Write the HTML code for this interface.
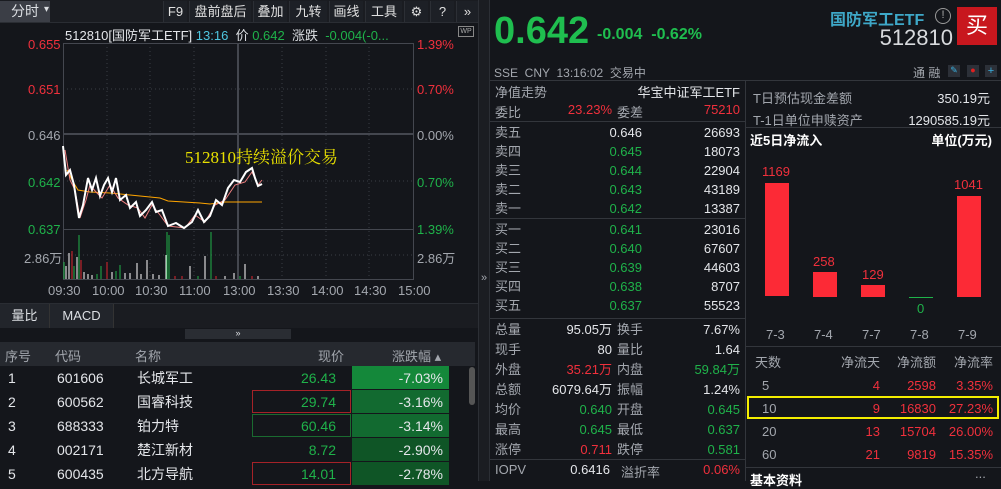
<!DOCTYPE html><html><head><meta charset="utf-8"><style>
*{margin:0;padding:0;box-sizing:border-box}
body{width:1001px;height:481px;background:#14161b;font-family:"Liberation Sans","Noto Sans CJK SC",sans-serif;font-size:13px;color:#dcdfe3;position:relative;overflow:hidden}
.a{position:absolute;white-space:nowrap}
.g{color:#1fb24a}.r{color:#f0303c}.w{color:#e4e6ea}.gy{color:#a3a7ae}
.rt{text-align:right}
.btn{position:absolute;top:1px;height:21px;line-height:21px;background:#1d2026;text-align:center;color:#e0e0e0;font-size:13px;border-left:1px solid #2c2f35}
</style></head><body>
<!-- top toolbar -->
<div class="a" style="left:0;top:0;width:478px;height:23px;background:#1a1c21;border-bottom:1px solid #2a2d33"></div>
<div class="a" style="left:0;top:1px;width:50px;height:21px;background:#3b3e46;line-height:21px;text-align:center;font-size:14px">分时</div>
<div class="a" style="left:44px;top:4px;font-size:10px">▾</div>
<div class="btn" style="left:163px;width:24px">F9</div>
<div class="btn" style="left:189px;width:62px">盘前盘后</div>
<div class="btn" style="left:253px;width:34px">叠加</div>
<div class="btn" style="left:289px;width:38px">九转</div>
<div class="btn" style="left:329px;width:34px">画线</div>
<div class="btn" style="left:365px;width:37px">工具</div>
<div class="btn" style="left:404px;width:24px">⚙</div>
<div class="btn" style="left:430px;width:24px">?</div>
<div class="btn" style="left:456px;width:22px">»</div>
<!-- chart header -->
<div class="a" style="left:65px;top:25px;font-size:13px"><span class="w">512810[国防军工ETF]</span> <span style="color:#4ec6e0">13:16</span> &nbsp;价 <span class="g">0.642</span> &nbsp;涨跌 &nbsp;<span class="g">-0.004(-0...</span></div>
<div class="a" style="left:458px;top:26px;width:16px;height:11px;border:1px solid #888;font-size:7px;line-height:9px;text-align:center;color:#aaa">WP</div>
<!-- chart -->
<svg class="a" style="left:0;top:0" width="478" height="300">
<g stroke="#3a3d44" stroke-dasharray="1,3" fill="none">
<line x1="63" y1="89" x2="413" y2="89"/><line x1="63" y1="181" x2="413" y2="181"/><line x1="63" y1="255" x2="413" y2="255"/>
<line x1="107" y1="43" x2="107" y2="279"/><line x1="150" y1="43" x2="150" y2="279"/><line x1="194" y1="43" x2="194" y2="279"/>
<line x1="282" y1="43" x2="282" y2="279"/><line x1="326" y1="43" x2="326" y2="279"/><line x1="369" y1="43" x2="369" y2="279"/>
</g>
<g stroke="#44474f" fill="none" stroke-width="1">
<rect x="63.5" y="43.5" width="350" height="236"/>
<line x1="63" y1="134" x2="413" y2="134" stroke-width="2"/>
<line x1="63" y1="229.5" x2="413" y2="229.5"/>
<line x1="238" y1="43" x2="238" y2="279" stroke-width="2"/>
</g>
<polyline fill="none" stroke="#ffa500" stroke-width="1" points="67,170 72,180 78,190 90,192 110,193 130,195 160,198 168,201 200,203 210,204 225,202 240,202 262,202"/>
<polyline fill="none" stroke="#f08080" stroke-width="1" points="65,150 70,180 75,190 80,218 86,200 90,185 96,192 102,198 110,185 118,198 128,205 138,208 145,218 152,205 160,215 168,226 185,228 195,215 205,222 215,205 225,200 235,185 245,182 252,172 258,185 262,180"/>
<polyline fill="none" stroke="#fff" stroke-width="2" points="63,146 66,175 70,170 74,185 79,218 83,205 88,178 92,190 96,178 100,196 104,185 108,178 112,192 116,178 120,200 126,195 130,208 136,202 140,216 146,210 152,202 156,212 162,210 168,226 176,223 184,228 192,222 198,210 204,222 210,216 216,200 222,205 228,188 234,180 240,182 246,172 252,168 255,178 258,186 262,184"/>
<g stroke-width="1">
<line x1="64" y1="279" x2="64" y2="262" stroke="#1fb24a"/><line x1="66" y1="279" x2="66" y2="266" stroke="#fff"/><line x1="69" y1="279" x2="69" y2="253" stroke="#fff"/><line x1="72" y1="279" x2="72" y2="251" stroke="#e0252f"/><line x1="74" y1="279" x2="74" y2="266" stroke="#1fb24a"/><line x1="77" y1="279" x2="77" y2="257" stroke="#fff"/><line x1="79" y1="279" x2="79" y2="235" stroke="#1fb24a"/><line x1="81" y1="279" x2="81" y2="260" stroke="#e0252f"/><line x1="84" y1="279" x2="84" y2="272" stroke="#fff"/><line x1="88" y1="279" x2="88" y2="274" stroke="#fff"/><line x1="92" y1="279" x2="92" y2="275" stroke="#fff"/><line x1="97" y1="279" x2="97" y2="274" stroke="#1fb24a"/><line x1="101" y1="279" x2="101" y2="266" stroke="#1fb24a"/><line x1="107" y1="279" x2="107" y2="262" stroke="#e0252f"/><line x1="112" y1="279" x2="112" y2="272" stroke="#fff"/><line x1="116" y1="279" x2="116" y2="271" stroke="#1fb24a"/><line x1="120" y1="279" x2="120" y2="265" stroke="#1fb24a"/><line x1="125" y1="279" x2="125" y2="273" stroke="#fff"/><line x1="130" y1="279" x2="130" y2="273" stroke="#fff"/><line x1="137" y1="279" x2="137" y2="263" stroke="#fff"/><line x1="141" y1="279" x2="141" y2="274" stroke="#fff"/><line x1="147" y1="279" x2="147" y2="260" stroke="#fff"/><line x1="153" y1="279" x2="153" y2="274" stroke="#fff"/><line x1="159" y1="279" x2="159" y2="275" stroke="#fff"/><line x1="166" y1="279" x2="166" y2="255" stroke="#fff"/><line x1="167" y1="279" x2="167" y2="232" stroke="#1fb24a"/><line x1="169" y1="279" x2="169" y2="235" stroke="#1fb24a"/><line x1="175" y1="279" x2="175" y2="276" stroke="#e0252f"/><line x1="182" y1="279" x2="182" y2="276" stroke="#e0252f"/><line x1="190" y1="279" x2="190" y2="266" stroke="#fff"/><line x1="198" y1="279" x2="198" y2="276" stroke="#1fb24a"/><line x1="205" y1="279" x2="205" y2="256" stroke="#fff"/><line x1="211" y1="279" x2="211" y2="232" stroke="#1fb24a"/><line x1="216" y1="279" x2="216" y2="276" stroke="#e0252f"/><line x1="225" y1="279" x2="225" y2="276" stroke="#fff"/><line x1="234" y1="279" x2="234" y2="273" stroke="#fff"/><line x1="240" y1="279" x2="240" y2="276" stroke="#1fb24a"/><line x1="245" y1="279" x2="245" y2="264" stroke="#fff"/><line x1="252" y1="279" x2="252" y2="276" stroke="#e0252f"/><line x1="258" y1="279" x2="258" y2="276" stroke="#fff"/>
</g>
<text x="185" y="163" fill="#e8e000" font-size="17" font-family="Liberation Serif,Noto Serif CJK SC,serif">512810持续溢价交易</text>
</svg>
<div class="a r" style="left:28px;top:37px">0.655</div>
<div class="a r" style="left:28px;top:82px">0.651</div>
<div class="a gy" style="left:28px;top:128px">0.646</div>
<div class="a g" style="left:28px;top:175px">0.642</div>
<div class="a g" style="left:28px;top:222px">0.637</div>
<div class="a gy" style="left:24px;top:248px">2.86万</div>
<div class="a r" style="left:417px;top:37px">1.39%</div>
<div class="a r" style="left:417px;top:82px">0.70%</div>
<div class="a gy" style="left:417px;top:128px">0.00%</div>
<div class="a g" style="left:417px;top:175px">0.70%</div>
<div class="a g" style="left:417px;top:222px">1.39%</div>
<div class="a gy" style="left:417px;top:248px">2.86万</div>
<div class="a gy" style="left:48px;top:283px">09:30</div>
<div class="a gy" style="left:92px;top:283px">10:00</div>
<div class="a gy" style="left:135px;top:283px">10:30</div>
<div class="a gy" style="left:179px;top:283px">11:00</div>
<div class="a gy" style="left:223px;top:283px">13:00</div>
<div class="a gy" style="left:267px;top:283px">13:30</div>
<div class="a gy" style="left:311px;top:283px">14:00</div>
<div class="a gy" style="left:354px;top:283px">14:30</div>
<div class="a gy" style="left:398px;top:283px">15:00</div>
<!-- tabs -->
<div class="a" style="left:0;top:303px;width:478px;height:25px;background:#1a1c21;border-top:1px solid #2a2d33"></div>
<div class="a" style="left:0;top:304px;width:50px;height:24px;background:#22252b;border-right:1px solid #333;line-height:24px;text-align:center">量比</div>
<div class="a" style="left:50px;top:304px;width:64px;height:24px;background:#22252b;border-right:1px solid #333;line-height:24px;text-align:center">MACD</div>
<div class="a" style="left:185px;top:329px;width:106px;height:10px;background:#2a2d33;font-size:9px;text-align:center;line-height:9px">»</div>
<!-- table -->
<div class="a" style="left:0;top:342px;width:475px;height:24px;background:#26292f"></div>
<div class="a gy" style="left:5px;top:346px">序号</div>
<div class="a gy" style="left:55px;top:346px">代码</div>
<div class="a gy" style="left:135px;top:346px">名称</div>
<div class="a gy" style="left:318px;top:346px">现价</div>
<div class="a gy" style="left:392px;top:346px">涨跌幅 ▴</div>
<div class="a" style="left:352px;top:366px;width:97px;height:23px;background:#14883a"></div>
<div class="a" style="left:352px;top:390px;width:97px;height:23px;background:#126a30"></div>
<div class="a" style="left:352px;top:414px;width:97px;height:23px;background:#126a30"></div>
<div class="a" style="left:352px;top:438px;width:97px;height:23px;background:#0f5526"></div>
<div class="a" style="left:352px;top:462px;width:97px;height:23px;background:#0f5526"></div>
<div class="a" style="left:252px;top:390px;width:99px;height:23px;border:1px solid #a52228"></div>
<div class="a" style="left:252px;top:414px;width:99px;height:23px;border:1px solid #1a6b30"></div>
<div class="a" style="left:252px;top:462px;width:99px;height:23px;border:1px solid #a52228"></div>
<div class="a" style="left:469px;top:367px;width:6px;height:38px;background:#555;border-radius:3px"></div>
<div class="a w" style="left:8px;top:366px;line-height:24px;font-size:14px">1<br>2<br>3<br>4<br>5</div>
<div class="a w" style="left:57px;top:366px;line-height:24px;font-size:14px">601606<br>600562<br>688333<br>002171<br>600435</div>
<div class="a w" style="left:137px;top:366px;line-height:24px;font-size:14px">长城军工<br>国睿科技<br>铂力特<br>楚江新材<br>北方导航</div>
<div class="a g rt" style="left:250px;width:86px;top:366px;line-height:24px;font-size:14px">26.43<br>29.74<br>60.46<br>8.72<br>14.01</div>
<div class="a w rt" style="left:350px;width:93px;top:366px;line-height:24px;font-size:14px">-7.03%<br>-3.16%<br>-3.14%<br>-2.90%<br>-2.78%</div>
<!-- divider -->
<div class="a" style="left:478px;top:0;width:12px;height:481px;background:#1b1d22;border-left:1px solid #2c2f35;border-right:1px solid #2c2f35"></div>
<div class="a gy" style="left:481px;top:272px;font-size:11px">»</div>
<!-- middle -->
<div class="a" style="left:494px;top:10px;font-size:38px;font-weight:bold;color:#1fbe4f">0.642</div>
<div class="a" style="left:597px;top:26px;font-size:16px;font-weight:bold;color:#1fbe4f">-0.004 &nbsp;-0.62%</div>
<div class="a gy" style="left:494px;top:64px;font-size:12px">SSE &nbsp;CNY &nbsp;13:16:02 &nbsp;交易中</div>
<div class="a" style="left:490px;top:80px;width:255px;border-top:1px solid #33363c"></div>
<div class="a gy" style="left:495px;top:82px">净值走势</div>
<div class="a w rt" style="left:620px;width:120px;top:82px">华宝中证军工ETF</div>
<div class="a gy" style="left:495px;top:102px">委比</div>
<div class="a r rt" style="left:540px;width:72px;top:102px">23.23%</div>
<div class="a gy" style="left:617px;top:102px">委差</div>
<div class="a r rt" style="left:660px;width:80px;top:102px">75210</div>
<div class="a" style="left:490px;top:121px;width:255px;border-top:1px solid #33363c"></div>
<div class="a gy" style="left:495px;top:123px;line-height:19px">卖五<br>卖四<br>卖三<br>卖二<br>卖一</div>
<div class="a rt" style="left:580px;width:62px;top:123px;line-height:19px"><span class="w">0.646</span><br><span class="g">0.645<br>0.644<br>0.643<br>0.642</span></div>
<div class="a w rt" style="left:660px;width:80px;top:123px;line-height:19px">26693<br>18073<br>22904<br>43189<br>13387</div>
<div class="a" style="left:490px;top:218px;width:255px;border-top:1px solid #33363c"></div>
<div class="a gy" style="left:495px;top:220px;line-height:19px">买一<br>买二<br>买三<br>买四<br>买五</div>
<div class="a g rt" style="left:580px;width:62px;top:220px;line-height:19px">0.641<br>0.640<br>0.639<br>0.638<br>0.637</div>
<div class="a w rt" style="left:660px;width:80px;top:220px;line-height:19px">23016<br>67607<br>44603<br>8707<br>55523</div>
<div class="a" style="left:490px;top:318px;width:255px;border-top:1px solid #33363c"></div>
<div class="a gy" style="left:495px;top:320px;line-height:20px">总量<br>现手<br>外盘<br>总额<br>均价<br>最高<br>涨停</div>
<div class="a rt" style="left:520px;width:92px;top:320px;line-height:20px"><span class="w">95.05万<br>80</span><br><span class="r">35.21万</span><br><span class="w">6079.64万</span><br><span class="g">0.640<br>0.645</span><br><span class="r">0.711</span></div>
<div class="a gy" style="left:617px;top:320px;line-height:20px">换手<br>量比<br>内盘<br>振幅<br>开盘<br>最低<br>跌停</div>
<div class="a rt" style="left:660px;width:80px;top:320px;line-height:20px"><span class="w">7.67%<br>1.64</span><br><span class="g">59.84万</span><br><span class="w">1.24%</span><br><span class="g">0.645<br>0.637<br>0.581</span></div>
<div class="a" style="left:490px;top:459px;width:255px;border-top:1px solid #33363c"></div>
<div class="a gy" style="left:495px;top:462px">IOPV</div>
<div class="a w rt" style="left:530px;width:80px;top:462px">0.6416</div>
<div class="a gy" style="left:621px;top:462px">溢折率</div>
<div class="a r rt" style="left:660px;width:80px;top:462px">0.06%</div>
<div class="a" style="left:745px;top:80px;width:1px;height:401px;background:#33363c"></div>
<!-- right -->
<div class="a" style="left:830px;top:6px;font-size:16px;font-weight:bold;color:#3ea8c8">国防军工ETF</div>
<div class="a" style="left:935px;top:8px;width:16px;height:16px;border:1.5px solid #999;border-radius:50%;font-size:11px;line-height:13px;text-align:center;color:#aaa">!</div>
<div class="a" style="left:957px;top:7px;width:40px;height:38px;background:#c8171e;color:#fff;font-size:22px;line-height:38px;text-align:center">买</div>
<div class="a rt" style="left:850px;width:103px;top:25px;font-size:22px;color:#d8dadd">512810</div>
<div class="a gy" style="left:913px;top:64px;font-size:12px">通 融</div>
<div class="a" style="left:948px;top:65px;width:12px;height:12px;background:#2c3038;color:#3ab0e0;font-size:9px;text-align:center">✎</div>
<div class="a" style="left:967px;top:65px;width:12px;height:12px;background:#2c3038;color:#e02020;font-size:9px;text-align:center">●</div>
<div class="a" style="left:985px;top:65px;width:12px;height:12px;background:#2c3038;color:#3ab0e0;font-size:11px;line-height:12px;text-align:center">+</div>
<div class="a" style="left:746px;top:80px;width:255px;border-top:1px solid #33363c"></div>
<div class="a gy" style="left:753px;top:88px">T日预估现金差额</div>
<div class="a w rt" style="left:880px;width:110px;top:88px">350.19元</div>
<div class="a gy" style="left:753px;top:110px">T-1日单位申赎资产</div>
<div class="a w rt" style="left:880px;width:110px;top:110px">1290585.19元</div>
<div class="a" style="left:746px;top:127px;width:255px;border-top:1px solid #33363c"></div>
<div class="a" style="left:750px;top:130px;font-weight:bold;color:#fff">近5日净流入</div>
<div class="a rt" style="left:880px;width:112px;top:130px;font-weight:bold;color:#fff">单位(万元)</div>
<div class="a" style="left:765px;top:183px;width:24px;height:113px;background:#fc2a36"></div>
<div class="a" style="left:813px;top:272px;width:24px;height:25px;background:#fc2a36"></div>
<div class="a" style="left:861px;top:285px;width:24px;height:12px;background:#fc2a36"></div>
<div class="a" style="left:909px;top:297px;width:24px;height:1px;background:#1fb24a"></div>
<div class="a" style="left:957px;top:196px;width:24px;height:101px;background:#fc2a36"></div>
<div class="a r" style="left:762px;top:164px">1169</div>
<div class="a r" style="left:813px;top:254px">258</div>
<div class="a r" style="left:862px;top:267px">129</div>
<div class="a g" style="left:917px;top:301px">0</div>
<div class="a r" style="left:954px;top:177px">1041</div>
<div class="a gy" style="left:766px;top:327px">7-3</div>
<div class="a gy" style="left:814px;top:327px">7-4</div>
<div class="a gy" style="left:862px;top:327px">7-7</div>
<div class="a gy" style="left:910px;top:327px">7-8</div>
<div class="a gy" style="left:958px;top:327px">7-9</div>
<div class="a" style="left:746px;top:346px;width:255px;border-top:1px solid #33363c"></div>
<div class="a gy" style="left:755px;top:352px">天数</div>
<div class="a gy rt" style="left:820px;width:60px;top:352px">净流天</div>
<div class="a gy rt" style="left:880px;width:56px;top:352px">净流额</div>
<div class="a gy rt" style="left:935px;width:58px;top:352px">净流率</div>
<div class="a" style="left:747px;top:396px;width:252px;height:23px;border:2px solid #f4ee00"></div>
<div class="a gy" style="left:762px;top:374px;line-height:23px">5<br>10<br>20<br>60</div>
<div class="a r rt" style="left:820px;width:60px;top:374px;line-height:23px">4<br>9<br>13<br>21</div>
<div class="a r rt" style="left:880px;width:56px;top:374px;line-height:23px">2598<br>16830<br>15704<br>9819</div>
<div class="a r rt" style="left:935px;width:58px;top:374px;line-height:23px">3.35%<br>27.23%<br>26.00%<br>15.35%</div>
<div class="a" style="left:746px;top:467px;width:255px;border-top:1px solid #33363c"></div>
<div class="a" style="left:750px;top:470px;font-weight:bold;color:#fff">基本资料</div>
<div class="a gy" style="left:975px;top:466px">...</div>
</body></html>
